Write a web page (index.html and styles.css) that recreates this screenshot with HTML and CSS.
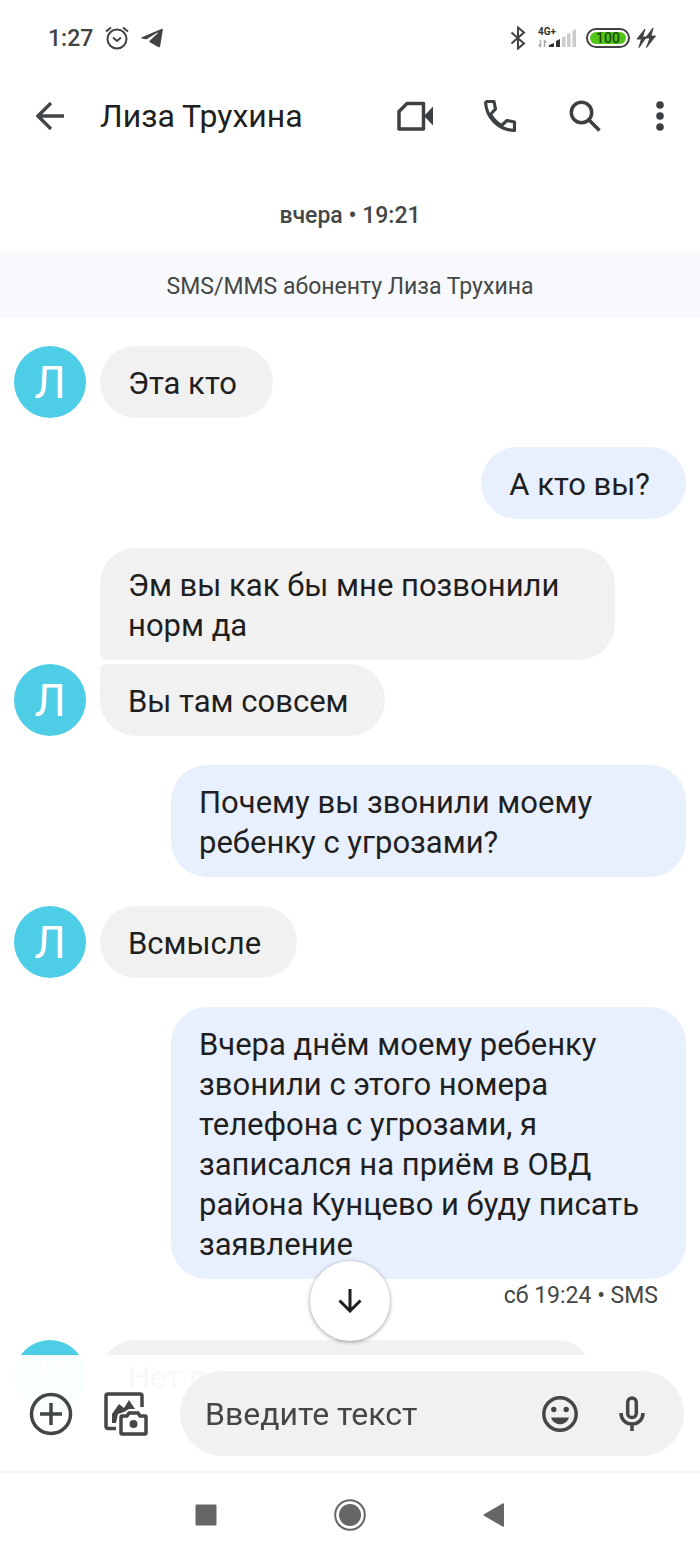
FILE: index.html
```
<!DOCTYPE html>
<html lang="ru">
<head>
  <meta charset="UTF-8" />
  <meta name="viewport" content="width=device-width, initial-scale=1.0" />
  <title>Лиза Трухина</title>
  <link rel="stylesheet" href="styles.css">
</head>
<body>
  <div class="status-bar">
    <div class="status-group">
      <span class="clock">1:27</span>
      <svg width="24" height="24" viewBox="0 0 24 24" fill="none" stroke="#424242" stroke-width="2">
        <circle cx="12" cy="13" r="9.5" />
        <path d="M8 11.5l4 3.5 4-3.5M1 5.5L6 1.5M23 5.5L18 1.5" />
      </svg>
      <svg width="22" height="20" viewBox="0 0 22 20" fill="#424242">
        <path d="M.8 9.2L20.4.9c1-.4 1.6.1 1.4 1.2l-2.6 16c-.2 1.2-1 1.5-2 .9L8.8 14.2c-.6-.4-.6-.9-.1-1.4l8-7.6c.5-.5 0-.8-.6-.4L6 11c-.4.3-.8.3-1.2.2L.9 10.400c-.8-.2-.8-.8-.1-1.200z" />
      </svg>
    </div>
    <div class="status-group right">
      <svg width="16" height="24" viewBox="0 0 16 24" fill="none" stroke="#424242" stroke-width="2">
        <path d="M1.5 6.5L14 17.5 8 22.5V1.5l6 5L1.5 17.5" />
      </svg>
      <div class="signal">
        <span class="network">4G+</span>
        <svg width="38" height="20" viewBox="0 0 38 20">
          <path d="M2.5 12v7M.5 16.500l2 2.500M6.500 19v-7M8 15l-1.500-3" stroke="#aaa" stroke-width="1.5" fill="none" />
          <path d="M11 19v-2l5-2v4zM18 19v-6l4-2v8z" fill="#333" />
          <path d="M24 19V9.5L27.5 8v11zM29 19V6l3.5-1.5V19zM34.5 19V2.5L38 1v18z" fill="#ccc" />
        </svg>
      </div>
      <div class="battery"><span>100</span></div>
      <svg class="bolts" width="20" height="20" viewBox="0 0 20 20" fill="#424242" stroke="#424242">
        <path d="M9 1L1 11h4.5L3 19.5 10.5 9H6.5zM17 0L9.5 10H14l-3.500 9.500L19.500 8h-4.500z" />
      </svg>
    </div>
  </div>

  <header class="app-bar">
    <button class="icon-btn" aria-label="Назад">
      <svg width="28" height="28" viewBox="0 0 28 28" fill="none" stroke="#44474a" stroke-width="3.4">
        <path d="M28 14H2.500M15 1L2 14l13 13" />
      </svg>
    </button>
    <h1>Лиза Трухина</h1>
    <button class="icon-btn" aria-label="Видеозвонок">
      <svg width="36" height="30" viewBox="0 0 36 30">
        <path d="M2 10.5L10 2.5h16.5V28H2z" fill="none" stroke="#3c4043" stroke-width="3.5" stroke-linejoin="round" />
        <path d="M27 15L36 5.5v19z" fill="#3c4043" />
      </svg>
    </button>
    <button class="icon-btn" aria-label="Позвонить">
      <svg width="34" height="34" viewBox="0 0 34 34" fill="none" stroke="#3c4043" stroke-width="3.2" stroke-linejoin="round">
        <path d="M2.500 2.500h8.500l1.500 7.500-5 5.500M7.500 15.500c3 5 6 8 11 11M18.500 26.500l5.500-5 7.500 1.500v8.500C15 31 3 18 2.500 2.500" />
      </svg>
    </button>
    <button class="icon-btn" aria-label="Поиск">
      <svg width="32" height="32" viewBox="0 0 32 32" fill="none" stroke="#3c4043" stroke-width="3.5">
        <circle cx="12.5" cy="12.5" r="10.2" />
        <path d="M20 20l10.5 10.5" />
      </svg>
    </button>
    <button class="icon-btn more" aria-label="Ещё">
      <svg width="8" height="30" viewBox="0 0 8 30" fill="#3c4043">
        <circle cx="4" cy="4" r="3.8" /><circle cx="4" cy="15" r="3.8" /><circle cx="4" cy="26" r="3.8" />
      </svg>
    </button>
  </header>

  <main>
    <p class="date">вчера • 19:21</p>
    <p class="notice">SMS/MMS абоненту Лиза Трухина</p>

    <div class="thread">
      <div class="row received">
        <div class="avatar">Л</div>
        <p class="bubble">Эта кто</p>
      </div>
      <div class="row sent">
        <p class="bubble">А кто вы?</p>
      </div>
      <div class="row received">
        <div class="avatar">Л</div>
        <div class="stack">
          <p class="bubble first">Эм вы как бы мне позвонили норм да</p>
          <p class="bubble last">Вы там совсем</p>
        </div>
      </div>
      <div class="row sent">
        <p class="bubble">Почему вы звонили моему ребенку с угрозами?</p>
      </div>
      <div class="row received">
        <div class="avatar">Л</div>
        <p class="bubble">Всмысле</p>
      </div>
      <div class="row sent">
        <div class="stack">
          <p class="bubble">Вчера днём моему ребенку звонили с этого номера телефона с угрозами, я записался на приём в ОВД района Кунцево и буду писать заявление</p>
          <p class="meta">сб 19:24 • SMS</p>
        </div>
      </div>
      <div class="row received">
        <div class="avatar">Л</div>
        <p class="bubble partial">Нет в</p>
      </div>
    </div>
  </main>

  <footer class="bottom">
    <button class="scroll-down" aria-label="Вниз">
      <svg width="24" height="24" viewBox="0 0 24 24" fill="none" stroke="#1f1f1f" stroke-width="3">
        <path d="M12 0v22M1.5 11.5L12 22l10.5-10.5" />
      </svg>
    </button>
    <form class="composer">
      <button type="button" class="icon-btn" aria-label="Добавить">
        <svg width="44" height="44" viewBox="0 0 44 44" fill="none" stroke="#444746" stroke-width="3.5">
          <circle cx="22" cy="22" r="19.5" />
          <path d="M22 11v22M11 22h22" />
        </svg>
      </button>
      <button type="button" class="icon-btn gallery" aria-label="Галерея">
        <svg width="44" height="44" viewBox="0 0 44 44">
          <path d="M12 36.5H4a2 2 0 0 1-2-2V4a2 2 0 0 1 2-2h32a2 2 0 0 1 2 2v11" fill="none" stroke="#444746" stroke-width="3.5" />
          <path d="M8 31V22l7-10 5 4 5-8 6 9h-6l-5 3-6 2-2 9z" fill="#444746" />
          <path d="M18 24h5l2-3h9l2 3h5a1 1 0 0 1 1 1v16a1 1 0 0 1-1 1H18a1 1 0 0 1-1-1V25a1 1 0 0 1 1-1z" fill="#fff" stroke="#444746" stroke-width="3.5" />
          <circle cx="29.5" cy="32" r="4" fill="#444746" />
        </svg>
      </button>
      <div class="field">
        <input type="text" placeholder="Введите текст" aria-label="Введите текст">
        <button type="button" class="icon-btn" aria-label="Эмодзи">
          <svg width="36" height="36" viewBox="0 0 36 36" fill="#444746">
            <circle cx="18" cy="18" r="16.2" fill="none" stroke="#444746" stroke-width="3.5" />
            <circle cx="11.8" cy="13.5" r="2.7" /><circle cx="24.2" cy="13.5" r="2.7" />
            <path d="M9 21.5h18c-1.5 4.5-5 6.800-9 6.800s-7.500-2.300-9-6.800z" />
          </svg>
        </button>
        <button type="button" class="icon-btn" aria-label="Голосовое сообщение">
          <svg width="26" height="36" viewBox="0 0 26 36" fill="none" stroke="#444746" stroke-width="3.5">
            <rect x="8.7" y="2" width="8.6" height="19.5" rx="4.3" />
            <path d="M2 17c0 6.5 4.8 11 11 11s11-4.5 11-11M13 28v7" />
          </svg>
        </button>
      </div>
    </form>
    <nav class="system-nav">
      <button class="icon-btn" aria-label="Недавние">
        <svg width="22" height="22" viewBox="0 0 22 22" fill="#666"><rect x=".5" y=".5" width="21" height="21" rx="1" /></svg>
      </button>
      <button class="icon-btn" aria-label="Домой">
        <svg width="32" height="32" viewBox="0 0 32 32" fill="#666">
          <circle cx="16" cy="16" r="14.8" fill="none" stroke="#666" stroke-width="2" />
          <circle cx="16" cy="16" r="11" />
        </svg>
      </button>
      <button class="icon-btn" aria-label="Назад">
        <svg width="22" height="24" viewBox="0 0 22 24" fill="#666"><path d="M1 11.2a1 1 0 0 0 0 1.6l18.5 10.8a1 1 0 0 0 1.5-.8V1.2a1 1 0 0 0-1.5-.8z" /></svg>
      </button>
    </nav>
  </footer>
</body>
</html>
```

FILE: styles.css
```
*, *::before, *::after {
  margin: 0;
  padding: 0;
  box-sizing: border-box;
}

body {
  min-height: 100vh;
  padding-bottom: 84px;
  font-family: Roboto, "Noto Sans", sans-serif;
  background: #fff;
  color: #1f1f1f;
}

svg {
  display: block;
  flex: none;
}

button {
  border: none;
  background: none;
  cursor: pointer;
}

.icon-btn {
  display: flex;
  flex: none;
  align-items: center;
  justify-content: center;
  width: 44px;
  height: 44px;
}

/* Status bar */
.status-bar {
  display: flex;
  justify-content: space-between;
  padding: 24px 44px 0 48px;
}

.status-group {
  display: flex;
  align-items: center;
  gap: 12px;
  height: 28px;
}

.status-group.right {
  gap: 10px;
}

.clock {
  font-size: 23px;
  font-weight: 500;
  color: #424242;
}

.signal {
  position: relative;
  margin-left: 2px;
}

.network {
  position: absolute;
  top: -1px;
  left: 0;
  font-size: 10px;
  font-weight: 700;
  line-height: 10px;
  color: #333;
}

.battery {
  width: 44px;
  height: 20px;
  padding: 2px;
  border: 2px solid #424242;
  border-radius: 10px;
}

.battery span {
  display: block;
  height: 12px;
  border-radius: 6px;
  background: #52c41a;
  color: #1c4a0a;
  font-size: 14px;
  font-weight: 500;
  line-height: 12px;
  text-align: center;
}

.bolts {
  margin-left: -4px;
}

/* App bar */
.app-bar {
  display: flex;
  align-items: center;
  gap: 41px;
  height: 128px;
  padding: 0 28px;
}

.app-bar h1 {
  flex: 1;
  margin-left: -13px;
  font-size: 32px;
  font-weight: 400;
  white-space: nowrap;
}

.app-bar .more {
  width: 24px;
}

.date {
  padding: 20px 0;
  font-size: 23px;
  font-weight: 500;
  line-height: 32px;
  text-align: center;
  color: #444746;
}

.notice {
  padding: 19px 0 15px;
  font-size: 23px;
  line-height: 32px;
  text-align: center;
  color: #444746;
  background: #f8f9fd;
}

/* Messages */
.thread {
  display: flex;
  flex-direction: column;
  gap: 29px;
  padding: 28px 14px 0;
}

.row {
  display: flex;
  align-items: flex-end;
}

.received {
  gap: 14px;
  padding-right: 71px;
}

.sent {
  justify-content: flex-end;
  padding-left: 157px;
}

.stack {
  display: flex;
  flex-direction: column;
  align-items: flex-start;
  gap: 4px;
}

.avatar {
  flex: none;
  width: 72px;
  height: 72px;
  padding-top: 2px;
  border-radius: 50%;
  background: #4ecde6;
  color: #fff;
  font-size: 44px;
  line-height: 70px;
  text-align: center;
}

.bubble {
  padding: 18px 36px 14px 28px;
  border-radius: 36px;
  background: #f1f1f1;
  font-size: 31px;
  line-height: 40px;
}

.bubble.first {
  border-bottom-left-radius: 6px;
}

.bubble.last {
  border-top-left-radius: 6px;
}

.bubble.partial {
  flex: 1;
  margin-right: 22px;
}

.sent .bubble {
  background: #e8effd;
}

.sent .stack {
  align-items: flex-end;
  gap: 0;
}

.meta {
  padding: 2px 28px 0 0;
  font-size: 23px;
  line-height: 30px;
  color: #444746;
}

/* Bottom panel */
.bottom {
  position: fixed;
  right: 0;
  bottom: 0;
  left: 0;
}

.scroll-down {
  position: absolute;
  bottom: calc(100% + 14px);
  left: calc(50% - 40px);
  display: flex;
  align-items: center;
  justify-content: center;
  width: 80px;
  height: 80px;
  border-radius: 50%;
  background: #fff;
  box-shadow: 0 1px 4px rgba(0, 0, 0, 0.4);
}

.composer {
  display: flex;
  align-items: center;
  padding: 16px 16px 15px 29px;
  background: rgba(255, 255, 255, 0.97);
}

.gallery {
  margin: 0 32px 0 31px;
}

.field {
  display: flex;
  flex: 1;
  align-items: center;
  gap: 28px;
  min-width: 0;
  height: 85px;
  padding: 0 30px 0 25px;
  border-radius: 43px;
  background: #f1f1f1;
}

.field input {
  flex: 1;
  min-width: 0;
  border: none;
  outline: none;
  background: none;
  color: #1f1f1f;
  font-family: inherit;
  font-size: 32px;
}

.field input::placeholder {
  color: #444746;
  opacity: 1;
}

.system-nav {
  display: flex;
  align-items: center;
  justify-content: center;
  gap: 100px;
  height: 85px;
  border-top: 2px solid #f3f3f3;
  background: #fff;
}
```
